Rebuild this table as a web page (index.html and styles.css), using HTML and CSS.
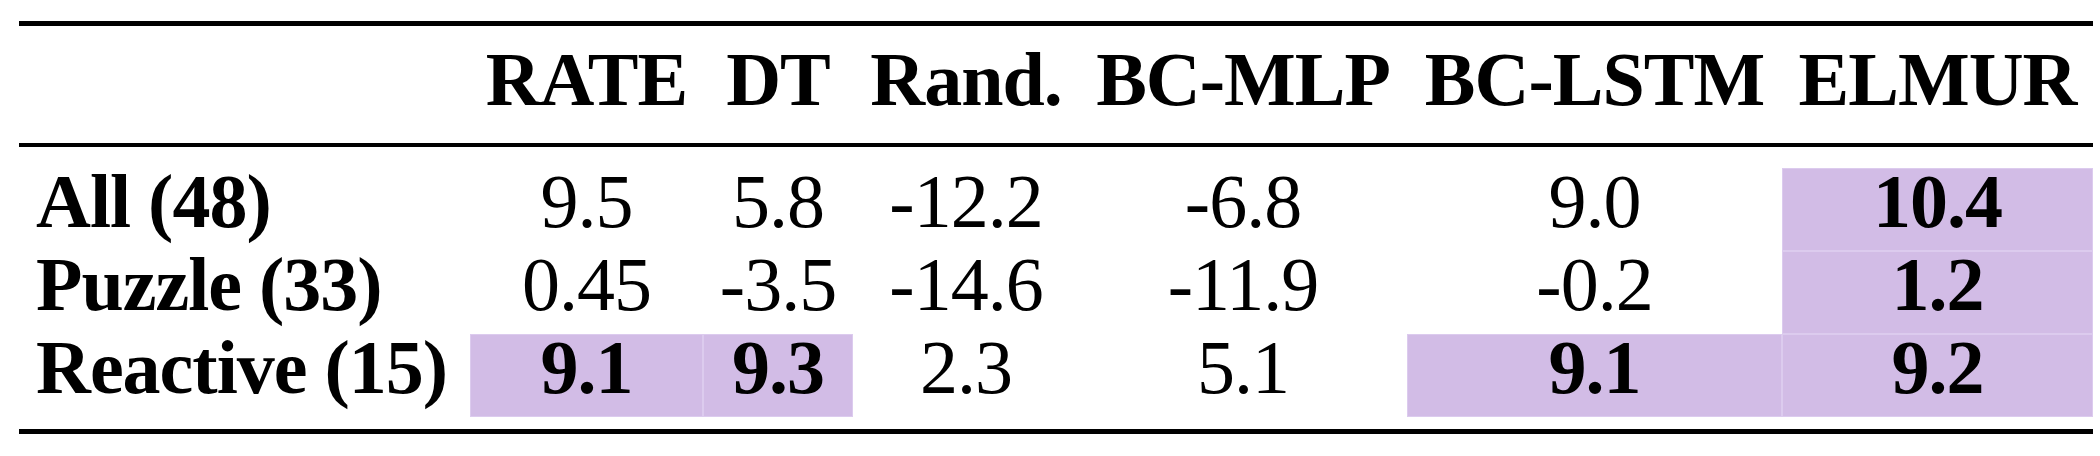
FILE: index.html
```html
<!DOCTYPE html>
<html lang="en">
<head>
    <meta charset="UTF-8">
    <title>Results table</title>
    <link rel="stylesheet" href="styles.css">
</head>
<body>
    <div class="page">
        <table class="results">
            <colgroup>
                <col class="col-name">
                <col class="col-rate">
                <col class="col-dt">
                <col class="col-rand">
                <col class="col-mlp">
                <col class="col-lstm">
                <col class="col-elmur">
            </colgroup>
            <thead>
                <tr>
                    <th class="name"></th>
                    <th>RATE</th>
                    <th>DT</th>
                    <th>Rand.</th>
                    <th>BC-MLP</th>
                    <th>BC-LSTM</th>
                    <th>ELMUR</th>
                </tr>
            </thead>
            <tbody>
                <tr>
                    <td class="name">All (48)</td>
                    <td>9.5</td>
                    <td>5.8</td>
                    <td>-12.2</td>
                    <td>-6.8</td>
                    <td>9.0</td>
                    <td class="best">10.4</td>
                </tr>
                <tr>
                    <td class="name">Puzzle (33)</td>
                    <td>0.45</td>
                    <td>-3.5</td>
                    <td>-14.6</td>
                    <td>-11.9</td>
                    <td>-0.2</td>
                    <td class="best">1.2</td>
                </tr>
                <tr>
                    <td class="name">Reactive (15)</td>
                    <td class="best">9.1</td>
                    <td class="best">9.3</td>
                    <td>2.3</td>
                    <td>5.1</td>
                    <td class="best">9.1</td>
                    <td class="best">9.2</td>
                </tr>
            </tbody>
        </table>
    </div>
</body>
</html>
```

FILE: styles.css
```css
body {
    margin: 0;
    padding: 0;
    background-color: #fff;
    font-family: "Liberation Serif", "Times New Roman", serif;
    color: #000;
}

.page {
    padding: 21px 0 0 19px;
}

.results {
    width: 2074px;
    table-layout: fixed;
    border-collapse: separate;
    border-spacing: 0;
    border-top: 5px solid #000;
    border-bottom: 5px solid #000;
    font-size: 76px;
    letter-spacing: -1px;
}

.col-name { width: 451px; }
.col-rate { width: 233px; }
.col-dt { width: 150px; }
.col-rand { width: 226px; }
.col-mlp { width: 328px; }
.col-lstm { width: 375px; }
.col-elmur { width: 311px; }

.results th,
.results td {
    padding: 0;
    text-align: center;
    white-space: nowrap;
}

.results th {
    font-weight: bold;
    line-height: 67px;
    padding-top: 20px;
    padding-bottom: 30px;
    border-bottom: 4px solid #000;
}

.results td {
    font-weight: normal;
    line-height: 67px;
    padding-bottom: 16px;
}

/* gap under the mid rule and above the bottom rule */
.results tbody tr:first-child td {
    border-top: 21px solid #fff;
}

.results tbody tr:last-child td {
    border-bottom: 12px solid #fff;
}

.results .name {
    text-align: left;
    padding-left: 17px;
    font-weight: bold;
}

.results .best {
    font-weight: bold;
    background-color: #d2bce6;
    background-clip: padding-box;
    box-shadow: inset 0 0 0 1px #dccbee;
}
```
